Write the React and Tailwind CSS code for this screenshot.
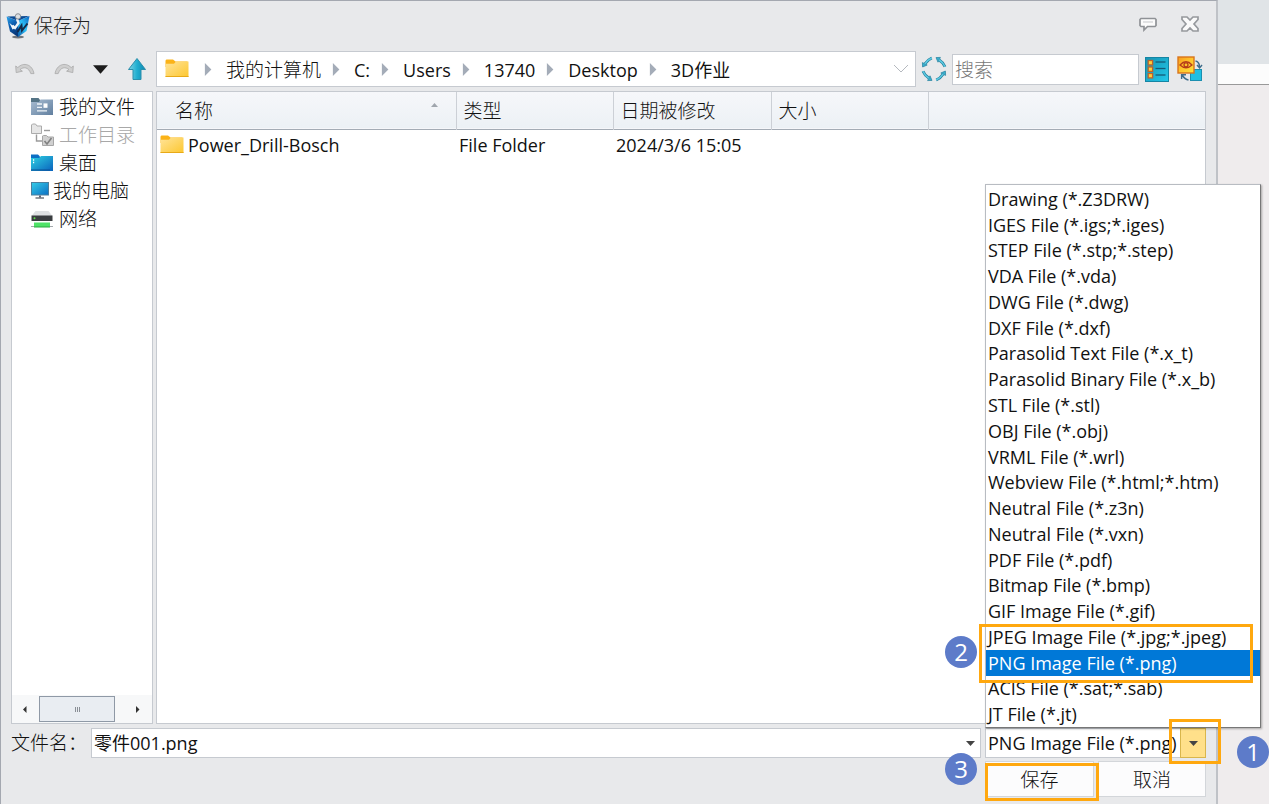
import { useState } from "react";

const fileTypes = [
  "Drawing (*.Z3DRW)",
  "IGES File (*.igs;*.iges)",
  "STEP File (*.stp;*.step)",
  "VDA File (*.vda)",
  "DWG File (*.dwg)",
  "DXF File (*.dxf)",
  "Parasolid Text File (*.x_t)",
  "Parasolid Binary File (*.x_b)",
  "STL File (*.stl)",
  "OBJ File (*.obj)",
  "VRML File (*.wrl)",
  "Webview File (*.html;*.htm)",
  "Neutral File (*.z3n)",
  "Neutral File (*.vxn)",
  "PDF File (*.pdf)",
  "Bitmap File (*.bmp)",
  "GIF Image File (*.gif)",
  "JPEG Image File (*.jpg;*.jpeg)",
  "PNG Image File (*.png)",
  "ACIS File (*.sat;*.sab)",
  "JT File (*.jt)",
];

const crumbs = ["我的计算机", "C:", "Users", "13740", "Desktop", "3D作业"];

const badgeClass =
  "absolute flex size-8 items-center justify-center rounded-full bg-[#5d7bc9] text-[24px] leading-none font-normal text-white";
const frameClass = "pointer-events-none absolute border-3 border-[#ffa80f]";

function AppLogo() {
  return (
    <svg width="24" height="26" viewBox="0 0 24 26" aria-hidden="true">
      <defs>
        <linearGradient id="logoLeft" x1="0" y1="0" x2="0.4" y2="1">
          <stop offset="0" stopColor="#2aa7f0" />
          <stop offset="0.5" stopColor="#0f5fb0" />
          <stop offset="1" stopColor="#083a7c" />
        </linearGradient>
        <linearGradient id="logoRight" x1="1" y1="0" x2="0" y2="1">
          <stop offset="0" stopColor="#0a62c0" />
          <stop offset="0.5" stopColor="#2cc0f8" />
          <stop offset="1" stopColor="#0a5aa8" />
        </linearGradient>
      </defs>
      <ellipse cx="12" cy="24" rx="6" ry="1.4" fill="#6f747a" />
      <path d="M0.5 3.5 L12 8 V24 L4 18.5 Z" fill="url(#logoLeft)" />
      <path d="M23.5 3 L12 8 V24 L20.5 18 Z" fill="url(#logoRight)" />
      <path d="M1 3.5 L23 3 L12 8 Z" fill="#0b4a94" />
      <path d="M11.5 19 L15.5 12.5 L16 17.5 L21.5 10.5" fill="none" stroke="#152a48" strokeWidth="2" />
      <path d="M11 6 L12.5 10 L9 15 L6.5 12.5" fill="none" stroke="#eef3f7" strokeWidth="2.4" />
      <path d="M3.5 10 L6 12 L10 14.5 L6.5 16.5 Z" fill="#f4f8fb" />
      <circle cx="12" cy="3.4" r="2.7" fill="#dcdfe2" stroke="#7f858b" strokeWidth="0.9" />
    </svg>
  );
}

function UndoIcon({ flip }) {
  return (
    <svg width="20" height="14" viewBox="0 0 20 14" aria-hidden="true">
      <g transform={flip ? "translate(20 0) scale(-1 1)" : undefined}>
        <path
          d="M0.7 4 L1.2 10.6 L7.4 9.2 L5 7.6 C8.5 4.6 13.4 4.8 15.8 11.6 L19 11.6 C17.4 2.4 8.6 -0.4 2.8 5.6 Z"
          fill="#cfcfcf"
          stroke="#a8a8a8"
          strokeWidth="0.8"
        />
      </g>
    </svg>
  );
}

function UpIcon() {
  return (
    <svg width="20" height="24" viewBox="0 0 20 24" aria-hidden="true">
      <defs>
        <linearGradient id="up" x1="0" y1="0" x2="1" y2="0">
          <stop offset="0" stopColor="#7fd6e6" />
          <stop offset="0.5" stopColor="#22aed0" />
          <stop offset="1" stopColor="#0e86b0" />
        </linearGradient>
      </defs>
      <path d="M10 1.5 L18.5 12.5 H14 V22.5 H6 V12.5 H1.5 Z" fill="url(#up)" stroke="#2b8fac" />
    </svg>
  );
}

function FolderIcon() {
  return (
    <svg className="shrink-0" width="24" height="20" viewBox="0 0 24 20" aria-hidden="true">
      <defs>
        <linearGradient id="folder" x1="0" y1="0" x2="1" y2="1">
          <stop offset="0" stopColor="#ffe49a" />
          <stop offset="1" stopColor="#fdc72f" />
        </linearGradient>
      </defs>
      <path d="M0.5 2 Q0.5 0.5 1.5 0.5 H8 L10.5 2.5 H22.5 V8 H0.5 Z" fill="#fbb318" />
      <path d="M0.5 4.8 H9 L11 2.5 H23.5 V18 H0.5 Z" fill="url(#folder)" />
      <path d="M0.5 17.5 H23.5" stroke="#e8a917" />
    </svg>
  );
}

function RefreshIcon() {
  return (
    <svg width="26" height="26" viewBox="0 0 26 26" aria-hidden="true">
      {[0, 90, 180, 270].map((r) => (
        <g key={r} transform={`rotate(${r} 13 13)`}>
          <path d="M10.8 2 C8 3.2 5.6 5.2 4 7.8" fill="none" stroke="#247f9d" strokeWidth="2.8" />
          <path d="M1.4 6.6 L6.2 9 L1.6 11 Z" fill="#38afcd" stroke="#247f9d" strokeWidth="0.7" />
          <path d="M10.8 2 C8 3.2 5.6 5.2 4 7.8" fill="none" stroke="#5ccae2" strokeWidth="1.5" />
        </g>
      ))}
    </svg>
  );
}

function ListViewIcon() {
  return (
    <svg width="24" height="25" viewBox="0 0 24 25" aria-hidden="true">
      <defs>
        <linearGradient id="lv" x1="0" y1="0" x2="1" y2="1">
          <stop offset="0" stopColor="#1793b3" />
          <stop offset="1" stopColor="#23c8ea" />
        </linearGradient>
      </defs>
      <rect x="0.5" y="0.5" width="23" height="24" fill="url(#lv)" stroke="#1585a4" />
      {[4, 10.5, 17].map((y) => (
        <g key={y}>
          <rect x="3.2" y={y - 0.5} width="4.4" height="4.4" fill="#ffcf3a" stroke="#c0622a" strokeWidth="1.3" />
          <path d={`M10.5 ${y + 1} H20.5`} stroke="#155a78" strokeWidth="1.3" />
        </g>
      ))}
    </svg>
  );
}

function SwapViewIcon() {
  return (
    <svg width="26" height="26" viewBox="0 0 26 26" aria-hidden="true">
      <defs>
        <linearGradient id="sv" x1="0" y1="0" x2="1" y2="1">
          <stop offset="0" stopColor="#f79a1d" />
          <stop offset="0.5" stopColor="#ffc62c" />
          <stop offset="1" stopColor="#ffe23c" />
        </linearGradient>
      </defs>
      <rect x="13.5" y="13.5" width="11" height="11" fill="#20bfe2" stroke="#1b8fb0" />
      <rect x="1" y="1" width="16" height="16" fill="url(#sv)" stroke="#d9741c" strokeWidth="1.4" />
      <path d="M3 9 Q9 2.5 15 9 Q9 14.5 3 9 Z" fill="none" stroke="#b53c1b" strokeWidth="1.3" />
      <circle cx="9" cy="8.8" r="2" fill="none" stroke="#b53c1b" strokeWidth="1.3" />
      <path d="M18.5 5 C21 5.5 22.5 7.5 22.5 11 M20 9 L22.6 12 L25 9" fill="none" stroke="#3f6c8a" strokeWidth="1.4" />
      <path d="M11.5 24 C8.5 23.5 7 22 5 19 M4.6 23 V18.8 L9 18.8" fill="none" stroke="#3f6c8a" strokeWidth="1.4" />
    </svg>
  );
}

function DocsIcon() {
  return (
    <svg width="22" height="18" viewBox="0 0 22 18" aria-hidden="true">
      <defs>
        <linearGradient id="docs" x1="0" y1="0" x2="1" y2="1">
          <stop offset="0" stopColor="#a9bdd2" />
          <stop offset="1" stopColor="#617f9f" />
        </linearGradient>
      </defs>
      <path d="M0 0 H7.5 L9 2 V5 H0 Z" fill="#557486" />
      <path d="M0 4 H8 L9.5 1.5 H22 V17 H0 Z" fill="url(#docs)" />
      <path d="M6 6 H11 M6 9.3 H11 M6 12.8 H16" stroke="#eef3f8" strokeWidth="1.3" />
      <rect x="12.5" y="5.4" width="4" height="4.4" fill="#fff" />
    </svg>
  );
}

function WorkDirIcon() {
  return (
    <svg width="24" height="24" viewBox="0 0 24 24" aria-hidden="true">
      <path d="M0.5 2 V10.5 H10.5 V3 H6 L4.5 1 H1.5 Z" fill="#e6e6e6" stroke="#ababab" />
      <path d="M13 7.5 H19" stroke="#9a9a9a" strokeWidth="1.4" />
      <path d="M5.5 11.5 V18 H11" fill="none" stroke="#9a9a9a" strokeWidth="1.4" />
      <path d="M11.5 13 V22.5 H22.5 V14 H17 L15.5 12.5 H12.5 Z" fill="#d0d0d0" stroke="#a6a6a6" />
      <path d="M13.5 18 L16 21 L20.5 15" fill="none" stroke="#808080" strokeWidth="1.6" />
    </svg>
  );
}

function DesktopIcon() {
  return (
    <svg width="22" height="18" viewBox="0 0 22 18" aria-hidden="true">
      <defs>
        <linearGradient id="desk" x1="0" y1="0" x2="1" y2="1">
          <stop offset="0" stopColor="#2fd2e2" />
          <stop offset="1" stopColor="#0a62bd" />
        </linearGradient>
      </defs>
      <path d="M0 0.5 H7 L9 2.5 V6 H0 Z" fill="#0c6fc4" />
      <path d="M0 4 H8 L10 2 H22 V17 H0 Z" fill="url(#desk)" />
      <path d="M2 6 H3.2 M2 8.5 H3.2" stroke="#fff" strokeWidth="1.3" />
      <path d="M0 16 H19" stroke="#0a4f94" />
    </svg>
  );
}

function ComputerIcon() {
  return (
    <svg width="18" height="18" viewBox="0 0 18 18" aria-hidden="true">
      <defs>
        <linearGradient id="pc" x1="0" y1="0" x2="1" y2="1">
          <stop offset="0" stopColor="#35cde8" />
          <stop offset="1" stopColor="#0b6fc4" />
        </linearGradient>
      </defs>
      <rect x="0.5" y="0.5" width="17" height="12.5" fill="url(#pc)" stroke="#4d7f9c" />
      <path d="M9 13.5 V15.5" stroke="#667" strokeWidth="2" />
      <path d="M4.5 16 H13" stroke="#4b5560" strokeWidth="1.2" />
    </svg>
  );
}

function NetworkIcon() {
  return (
    <svg width="22" height="18" viewBox="0 0 22 18" aria-hidden="true">
      <path d="M4.5 1 H17.5 L21.5 6 H0.5 Z" fill="#dfe1e3" />
      <rect x="0.5" y="5.5" width="21" height="5.5" fill="#3a3d40" />
      <circle cx="3.5" cy="8.2" r="1" fill="#5fe04b" />
      <path d="M0 16.5 H22" stroke="#a3a8ac" />
      <rect x="3" y="12.5" width="16" height="4.5" fill="#4fe268" />
      <path d="M3 17 H19" stroke="#2aa741" />
    </svg>
  );
}

function CommentIcon() {
  return (
    <svg width="18" height="15" viewBox="0 0 18 15" aria-hidden="true">
      <path
        d="M2 1.5 H16 L17 2.5 V8.5 L16 9.5 H8.5 L5 13 V9.5 H2 L1 8.5 V2.5 Z"
        fill="#fcfcfc"
        stroke="#8f9296"
        strokeWidth="1.7"
      />
      <path d="M4 5 H14" stroke="#c5c7ca" />
    </svg>
  );
}

function CloseIcon() {
  return (
    <svg width="18" height="16" viewBox="0 0 18 16" aria-hidden="true">
      <path
        d="M1 1 H6 L9 4 L12 1 H17 V3.5 L13 8 L17 12.5 V15 H12 L9 12 L6 15 H1 V12.5 L5 8 L1 3.5 Z"
        fill="#fafafa"
        stroke="#96999d"
        strokeWidth="1.7"
      />
    </svg>
  );
}

function Triangle({ dir = "down", className = "" }) {
  const d = dir === "right" ? "M2 0 L9 7 L2 14 Z" : dir === "left" ? "M9 0 L2 7 L9 14 Z" : "M0 3 H14 L7 11 Z";
  return (
    <svg className={className} viewBox="0 0 14 14" fill="currentColor" aria-hidden="true">
      <path d={d} />
    </svg>
  );
}

const places = [
  { name: "我的文件", icon: <DocsIcon />, gap: "gap-[6px]" },
  { name: "工作目录", icon: <WorkDirIcon />, gap: "gap-1", disabled: true },
  { name: "桌面", icon: <DesktopIcon />, gap: "gap-[6px]" },
  { name: "我的电脑", icon: <ComputerIcon />, gap: "gap-1" },
  { name: "网络", icon: <NetworkIcon />, gap: "gap-[6px]" },
];

export default function App() {
  const [fileName, setFileName] = useState("零件001.png");
  const [type, setType] = useState("PNG Image File (*.png)");
  const [search, setSearch] = useState("");

  const thClass = "border-r border-[#ccd0d6] pt-[2px] pl-[7px] text-left text-[19px] font-light text-[#111]";

  return (
    <div className="flex min-h-screen overflow-hidden bg-[#e8e9eb] font-['Open_Sans','Noto_Sans_CJK_SC',sans-serif] text-[18px] leading-6 text-[#111]">
      <main className="flex min-w-0 flex-1 flex-col border-t border-r-2 border-l border-t-[#a4a8b0] border-r-[#bfc2c7] border-l-[#a4a8b0]">
        {/* Title bar */}
        <header className="flex h-[50px] items-center justify-between pr-[17px] pl-[5px]">
          <h1 className="flex items-center gap-1 text-[19px] font-light text-[#222]">
            <AppLogo />
            保存为
          </h1>
          <div className="flex items-center gap-6 pb-1">
            <button aria-label="Feedback"><CommentIcon /></button>
            <button aria-label="Close"><CloseIcon /></button>
          </div>
        </header>

        {/* Toolbar */}
        <div className="mb-1 flex h-9 items-center pr-[13px] pl-[14px]">
          <div className="flex w-[141px] shrink-0 items-center gap-[19px]">
            <button aria-label="Back"><UndoIcon /></button>
            <button aria-label="Forward"><UndoIcon flip /></button>
            <button aria-label="History"><Triangle className="size-[15px] text-[#1c1c1c]" /></button>
            <button aria-label="Up"><UpIcon /></button>
          </div>
          <nav className="flex h-9 min-w-0 flex-1 items-center border border-[#c6cad0] bg-white pr-1 pl-2">
            <FolderIcon />
            <ol className="flex flex-1 items-center pt-px pl-1">
              {crumbs.map((c) => (
                <li key={c} className="flex items-center">
                  <Triangle dir="right" className="mx-[10px] size-[13px] text-[#a4acb8]" />
                  <a
                    href="#"
                    className={`whitespace-nowrap ${c === "我的计算机" ? "text-[19px] font-light" : ""}`}
                  >
                    {c}
                  </a>
                </li>
              ))}
            </ol>
            <button aria-label="Recent locations">
              <svg width="20" height="12" viewBox="0 0 20 12" fill="none" stroke="#b5b9bf">
                <path d="M3 2 L10 9 L17 2" />
              </svg>
            </button>
          </nav>
          <button aria-label="Refresh" className="mx-[5px]"><RefreshIcon /></button>
          <input
            aria-label="搜索"
            placeholder="搜索"
            value={search}
            onChange={(e) => setSearch(e.target.value)}
            className="h-[31px] w-[187px] border border-[#c6cad0] bg-white px-[2px] pt-[2px] text-[19px] font-light outline-none placeholder:text-[#777]"
          />
          <button aria-label="List view" className="ml-[6px]"><ListViewIcon /></button>
          <button aria-label="Switch view" className="ml-2"><SwapViewIcon /></button>
        </div>

        {/* Places and files */}
        <div className="flex flex-1 gap-[3px] pr-[10px] pl-[10px]">
          <aside className="flex w-[142px] shrink-0 flex-col border border-[#c6cad0] bg-white">
            <ul className="flex-1 pt-px">
              {places.map((p) => (
                <li key={p.name}>
                  <button
                    disabled={p.disabled}
                    className={`flex h-7 items-center pl-[19px] text-[19px] font-light whitespace-nowrap disabled:text-[#a8a8a8] ${p.gap}`}
                  >
                    {p.icon}
                    {p.name}
                  </button>
                </li>
              ))}
            </ul>
            <div className="flex h-7 items-center bg-[#f7f8f9]">
              <button aria-label="Scroll left" className="flex w-[27px] justify-center">
                <Triangle dir="left" className="size-[7px] text-[#333]" />
              </button>
              <div className="flex h-[26px] flex-1 items-center justify-center gap-px border border-[#8f99a6] bg-[#e9edf2]">
                <i className="h-[5px] w-px bg-[#8a8f96]" />
                <i className="h-[5px] w-px bg-[#8a8f96]" />
                <i className="h-[5px] w-px bg-[#8a8f96]" />
              </div>
              <button aria-label="Scroll right" className="flex w-[37px] justify-center pl-[10px]">
                <Triangle dir="right" className="size-[7px] text-[#333]" />
              </button>
            </div>
          </aside>

          <section className="min-w-0 flex-1 border border-[#c6cad0] bg-white">
            <table className="w-full table-fixed border-collapse">
              <colgroup>
                <col className="w-[299px]" />
                <col className="w-[157px]" />
                <col className="w-[158px]" />
                <col className="w-[157px]" />
                <col />
              </colgroup>
              <thead>
                <tr className="h-[37px] border-b border-b-[#a4acb5] bg-linear-to-b from-[#f6f7fa] to-[#ecf1f5]">
                  <th className="border-r border-[#ccd0d6] pt-[2px] pr-[18px] pl-[18px] text-left text-[19px] font-light text-[#111]">
                    <span className="flex justify-between">
                      名称
                      <svg className="mt-1" width="7" height="4" viewBox="0 0 7 4" aria-hidden="true">
                        <path d="M0 4 L3.5 0 L7 4 Z" fill="#a0a6ad" />
                      </svg>
                    </span>
                  </th>
                  <th className={thClass}>类型</th>
                  <th className={thClass}>日期被修改</th>
                  <th className={thClass}>大小</th>
                  <th aria-label="More" />
                </tr>
              </thead>
              <tbody>
                <tr className="h-8">
                  <td className="pl-[3px]">
                    <span className="flex items-center gap-1">
                      <FolderIcon />
                      Power_Drill-Bosch
                    </span>
                  </td>
                  <td className="pl-[3px]">File Folder</td>
                  <td className="pl-[3px] whitespace-nowrap">2024/3/6 15:05</td>
                  <td />
                  <td />
                </tr>
              </tbody>
            </table>
          </section>
        </div>

        {/* File name and type */}
        <div className="mt-1 flex items-center gap-1 pr-[10px] pl-[10px]">
          <label htmlFor="filename" className="w-[76px] shrink-0 text-[19px] font-light whitespace-nowrap">
            文件名：
          </label>
          <div className="flex h-[30px] min-w-0 flex-1 items-center border border-[#c6cad0] bg-white pr-[5px]">
            <input
              id="filename"
              value={fileName}
              onChange={(e) => setFileName(e.target.value)}
              className="min-w-0 flex-1 bg-transparent pl-[2px] outline-none"
            />
            <button aria-label="File name history"><Triangle className="size-[9px] text-[#444]" /></button>
          </div>
          <div className="relative w-[221px] shrink-0">
            <select
              aria-label="File type"
              value={type}
              onChange={(e) => setType(e.target.value)}
              className="block h-[30px] w-full appearance-none border border-[#c6cad0] bg-white pl-[2px] outline-none"
            >
              {fileTypes.map((t) => (
                <option key={t}>{t}</option>
              ))}
            </select>
            <span className="pointer-events-none absolute top-0 right-0 flex h-[30px] w-[26px] items-center justify-center border border-[#d9b64c] bg-[#ffe08a]">
              <Triangle className="size-[9px] text-[#444]" />
            </span>

            <ul
              role="listbox"
              aria-label="File types"
              className="absolute bottom-full left-0 flex h-[544px] w-[276px] flex-col border border-t-[#b8bcc2] border-r-[#777] border-b-[#777] border-l-[#b8bcc2] bg-white pt-px shadow-[1px_1px_2px_rgba(0,0,0,0.3)]"
            >
              {fileTypes.map((t) => (
                <li
                  key={t}
                  role="option"
                  aria-selected={t === type}
                  onClick={() => setType(t)}
                  className="flex flex-1 items-center pl-[2px] whitespace-nowrap aria-selected:bg-[#0078d7] aria-selected:text-white"
                >
                  {t}
                </li>
              ))}
            </ul>

            {/* Step markers */}
            <div className={`${frameClass} bottom-[75px] -left-[6px] h-[59px] w-[274px]`} />
            <span className={`${badgeClass} bottom-[90px] -left-10`}>2</span>
            <div className={`${frameClass} -top-[9px] -right-[15px] h-[45px] w-[52px]`} />
            <span className={`${badgeClass} top-2 -right-[63px]`}>1</span>
          </div>
        </div>

        {/* Actions */}
        <div className="mt-[3px] mb-[7px] flex justify-end gap-1 pr-[10px] text-[19px] font-light">
          <div className="relative">
            <button className="h-9 w-[109px] border border-[#d3d6da] bg-[#fcfcfd] pt-px">保存</button>
            <div className={`${frameClass} top-[2px] left-0 h-[38px] w-[114px]`} />
            <span className={`${badgeClass} -top-2 -left-10`}>3</span>
          </div>
          <button className="h-9 w-[108px] border border-[#d3d6da] bg-[#fcfcfd] pt-px">取消</button>
        </div>
      </main>

      {/* Main window behind the dialog */}
      <div className="flex w-[51px] shrink-0 flex-col">
        <div className="h-16 bg-[#e0e4e7]" />
        <div className="h-[21px] border-b border-[#999] bg-[#fcfcfc]" />
        <div className="flex-1 bg-[#efeced]" />
      </div>
    </div>
  );
}
